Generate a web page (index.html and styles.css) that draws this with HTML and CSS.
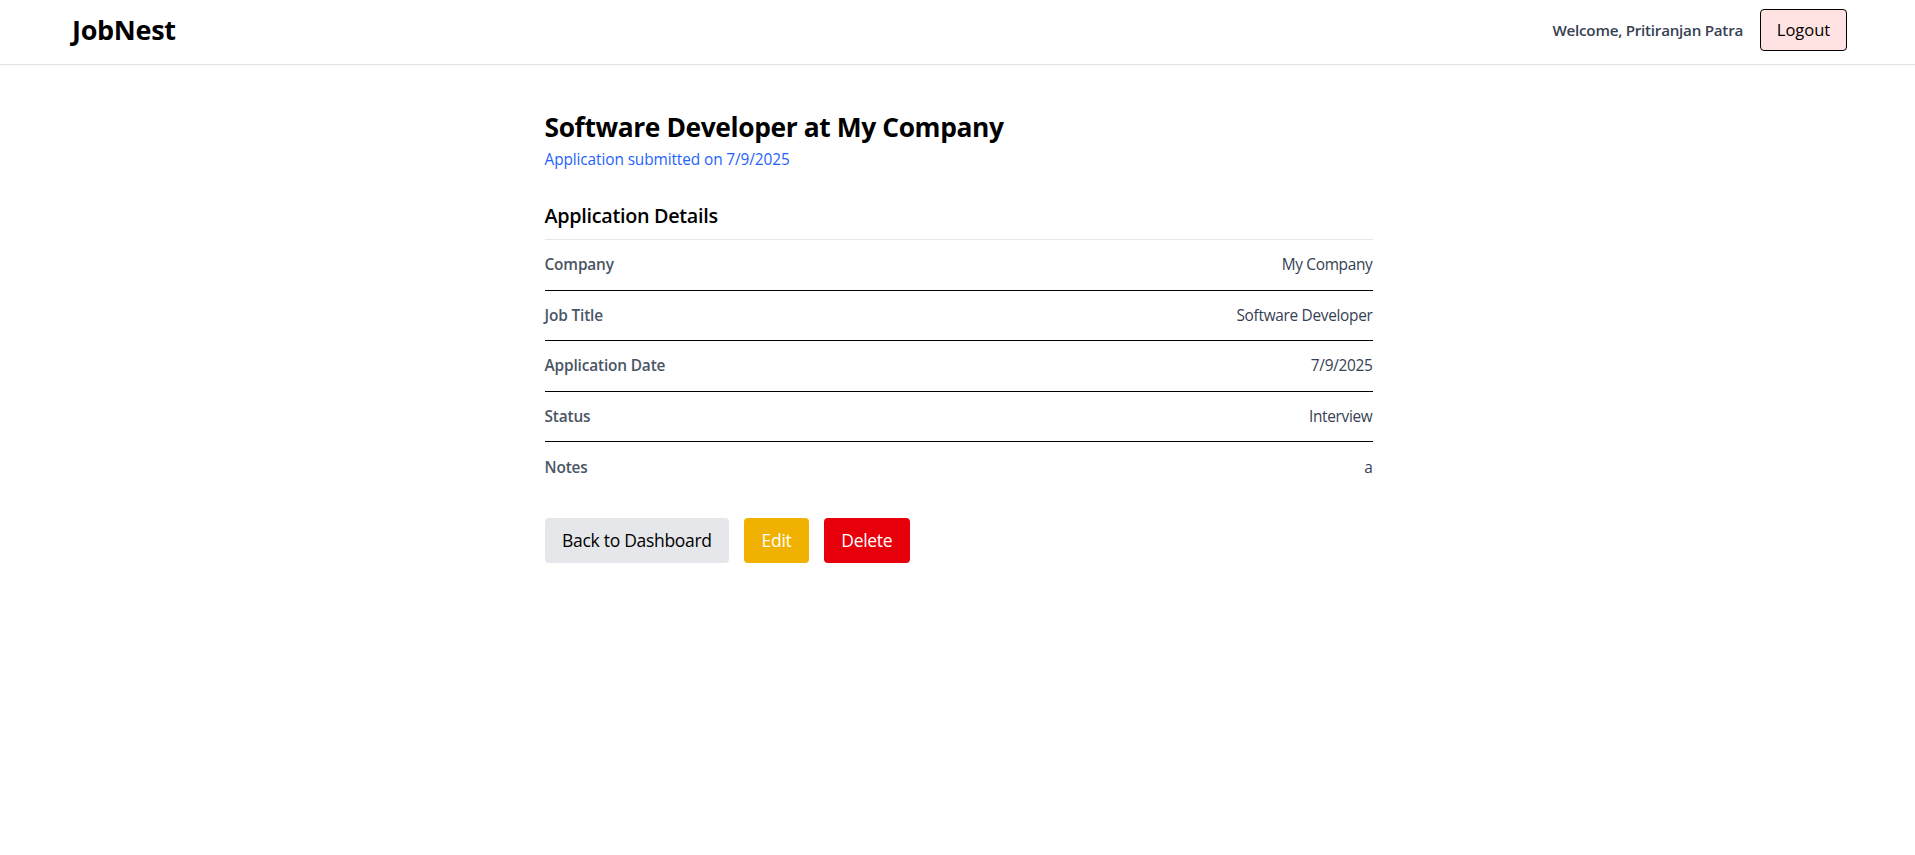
FILE: index.html
```html
<!DOCTYPE html>
<html lang="en">
<head>
<meta charset="utf-8">
<title>JobNest</title>
<link rel="stylesheet" href="styles.css">
</head>
<body>
<header class="topbar">
  <div class="brand">JobNest</div>
  <div class="user">
    <span class="welcome">Welcome, Pritiranjan Patra</span>
    <button class="logout">Logout</button>
  </div>
</header>
<main class="page">
  <h1 class="title">Software Developer at My Company</h1>
  <p class="subtitle">Application submitted on 7/9/2025</p>
  <h2 class="section">Application Details</h2>
  <div class="rows">
    <div class="row"><span class="label">Company</span><span class="value">My Company</span></div>
    <div class="row"><span class="label">Job Title</span><span class="value">Software Developer</span></div>
    <div class="row"><span class="label">Application Date</span><span class="value">7/9/2025</span></div>
    <div class="row"><span class="label">Status</span><span class="value">Interview</span></div>
    <div class="row"><span class="label">Notes</span><span class="value">a</span></div>
  </div>
  <div class="actions">
    <button class="btn btn-back">Back to Dashboard</button>
    <button class="btn btn-edit">Edit</button>
    <button class="btn btn-delete">Delete</button>
  </div>
</main>
</body>
</html>
```
FILE: styles.css
```css
* { box-sizing: border-box; }
html, body { margin: 0; padding: 0; background: #fff; }
body {
  font-family: "Open Sans", "Noto Sans", "DejaVu Sans", sans-serif;
  color: #000;
}
.topbar {
  height: 64px;
  display: flex;
  align-items: center;
  justify-content: space-between;
  padding: 0 68px 5px 72px;
  box-shadow: 0 1px 0 #e4e4e4, 0 2px 2px rgba(0,0,0,0.04);
}
.brand {
  font-size: 27px;
  font-weight: 700;
  letter-spacing: -0.3px;
}
.user {
  display: flex;
  align-items: center;
  gap: 17px;
}
.welcome {
  font-size: 15.2px;
  font-weight: 600;
  color: #364153;
  letter-spacing: -0.25px;
}
.logout {
  font-family: inherit;
  font-size: 16.5px;
  height: 42px;
  width: 87px;
  background: #ffe2e2;
  border: 1px solid #000;
  border-radius: 4px;
  color: #000;
  padding: 0;
}
.page {
  width: 828px;
  margin: 0 0 0 calc(50% - 413px);
  padding-top: 46px;
}
.title {
  margin: 0;
  font-size: 26.4px;
  line-height: 35px;
  font-weight: 700;
  letter-spacing: -0.4px;
}
.subtitle {
  margin: 4px 0 0;
  font-size: 15.4px;
  line-height: 22px;
  color: #1f63fb;
  letter-spacing: -0.1px;
}
.section {
  margin: 31px 0 0;
  font-size: 19.8px;
  line-height: 28px;
  font-weight: 600;
  padding-bottom: 9px;
  border-bottom: 1px solid #e5e7eb;
  letter-spacing: -0.3px;
}
.row {
  display: flex;
  justify-content: space-between;
  align-items: center;
  height: 50.6px;
  border-bottom: 1px solid #000;
  font-size: 15.4px;
  letter-spacing: -0.3px;
}
.row:last-child { border-bottom: none; }
.label { font-weight: 600; color: #4a5565; letter-spacing: -0.15px; }
.value { color: #364153; }
.actions {
  display: flex;
  gap: 14.6px;
  margin-top: 25px;
}
.btn {
  font-family: inherit;
  font-size: 17.5px;
  height: 45px;
  padding: 0 17.6px;
  border: none;
  border-radius: 4px;
  letter-spacing: -0.3px;
}
.btn-back { background: #e5e7eb; color: #000; }
.btn-edit { background: #f0b100; color: #fff; }
.btn-delete { background: #e7000b; color: #fff; }
```
